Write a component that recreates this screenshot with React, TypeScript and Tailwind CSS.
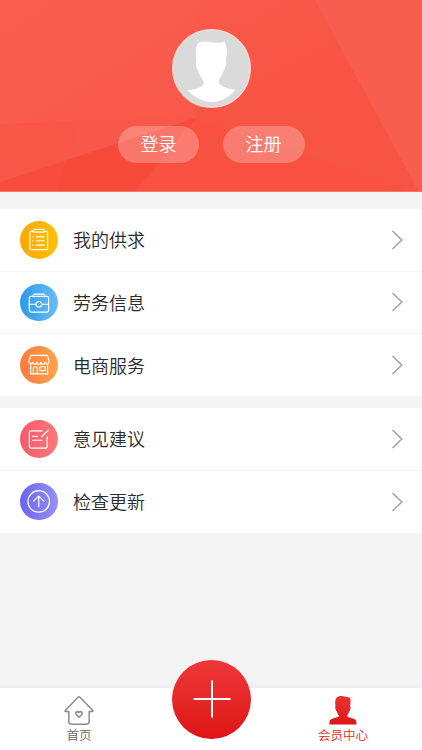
import type { ReactNode } from 'react';

type Item = { label: string; bg: string; icon: ReactNode };

const line = {
  fill: 'none',
  stroke: '#fff',
  strokeWidth: 1.2,
  strokeLinecap: 'round' as const,
  strokeLinejoin: 'round' as const,
};

// Every menu icon is drawn on a 38x38 grid, the size of its disc
const ListIcon = () => (
  <svg viewBox="0 0 38 38" className="w-full h-full" {...line}>
    <path d="M14 10.500h-2.500a1.500 1.500 0 0 0-1.500 1.500v15.500a1.500 1.500 0 0 0 1.500 1.500h15a1.500 1.500 0 0 0 1.500-1.500V12a1.500 1.500 0 0 0-1.500-1.500H24" />
    <path d="M13.500 11.200V9.500c0-.6.4-1 1-1h9c.6 0 1 .4 1 1v1.700z" />
    <path d="M16.500 16h8M16.500 20h8M16.500 24.500h8M12.900 16h.4M12.900 20h.4M12.900 24.500h.4" />
  </svg>
);

const CaseIcon = () => (
  <svg viewBox="0 0 38 38" className="w-full h-full" {...line}>
    <rect x="9.500" y="12.500" width="19.500" height="16" rx="1.800" />
    <path d="M13.500 12.500v-1.300c0-.6.4-1 1-1h9.500c.6 0 1 .4 1 1v1.300" />
    <path d="M9.500 20.500h6.500M22.300 20.500H29" />
    <circle cx="19.200" cy="20.500" r="2.800" />
  </svg>
);

const ShopIcon = () => (
  <svg viewBox="0 0 38 38" className="w-full h-full" {...line}>
    <path d="M11 9.500h16.700l2 6.200a2.100 2.300 0 0 1-4.100.5 2.100 2.300 0 0 1-4.200 0 2.100 2.300 0 0 1-4.200 0 2.100 2.300 0 0 1-4.200 0A2.100 2.300 0 0 1 9 15.700z" />
    <path d="M10.800 18.500v9.800H28v-9.800" />
    <path d="M13.500 28v-5.800c0-.8.5-1.200 1.200-1.200h1.600c.7 0 1.200.4 1.200 1.200V28" />
    <rect x="20" y="21" width="5.500" height="4" rx=".5" />
  </svg>
);

const NoteIcon = () => (
  <svg viewBox="0 0 38 38" className="w-full h-full" {...line}>
    <path d="M22.500 11H11.500a2 2 0 0 0-2 2v13.500a2 2 0 0 0 2 2h14a2 2 0 0 0 2-2V17" />
    <path d="M28.800 10.300l-7 6.700M12.800 16.500h5M12.800 20.500h9.500" />
  </svg>
);

const UpIcon = () => (
  <svg viewBox="0 0 38 38" className="w-full h-full" {...line}>
    <circle cx="19" cy="18.700" r="10.900" />
    <path d="M19 24V13.400M13.800 18.300l5.200-5 5.200 5" />
  </svg>
);

const groups: Item[][] = [
  [
    { label: '我的供求', bg: 'bg-linear-to-r from-[#ffa606] to-[#fdc008]', icon: <ListIcon /> },
    { label: '劳务信息', bg: 'bg-linear-to-r from-[#2c98ea] to-[#66bdf8]', icon: <CaseIcon /> },
    { label: '电商服务', bg: 'bg-linear-to-r from-[#fb7b3b] to-[#fda34d]', icon: <ShopIcon /> },
  ],
  [
    { label: '意见建议', bg: 'bg-linear-to-r from-[#f9566a] to-[#f97a7a]', icon: <NoteIcon /> },
    { label: '检查更新', bg: 'bg-linear-to-r from-[#6c64ee] to-[#9690f6]', icon: <UpIcon /> },
  ],
];

function Facets() {
  return (
    <svg viewBox="0 0 422 192" preserveAspectRatio="none" className="absolute inset-0 w-full h-full">
      <defs>
        <linearGradient id="right" x1="0" y1="0" x2=".6" y2="1">
          <stop offset="0" stopColor="#f95b4c" />
          <stop offset=".5" stopColor="#f85444" />
          <stop offset="1" stopColor="#f85444" />
        </linearGradient>
        <linearGradient id="left" x1="0" y1="0" x2="1" y2="1">
          <stop offset="0" stopColor="#f95e4f" />
          <stop offset="1" stopColor="#f95849" />
        </linearGradient>
      </defs>
      <rect width="422" height="192" fill="#f85e4f" />
      <path d="M0 0h196v118L0 124z" fill="url(#left)" />
      <path d="M196 0h119l104 192H196z" fill="url(#right)" />
      <path d="M0 124l196-6L0 182z" fill="#f85647" />
      <path d="M78 121.600l118-3.600-126 41z" fill="#f85849" />
      <path d="M0 182l196-64-61 74H0z" fill="#f84d3c" />
      <path d="M66 160.500l130-42.500-61 74H56z" fill="#f74a38" />
      <path d="M196 118l-61 74h29z" fill="#f85141" />
      <path d="M196 118l-32 74h246z" fill="#f85141" />
      <path d="M0 191.500h422" stroke="#f87468" />
    </svg>
  );
}

function Avatar() {
  return (
    <svg viewBox="0 0 79 79" className="w-[79px] h-[79px]">
      <circle cx="39.500" cy="39.500" r="38.900" fill="#dadada" stroke="#fbdcd9" strokeWidth="1.200" />
      <path
        fill="#fff"
        d="M24.500 31.500C23.700 28 23.300 20 24.700 16.500c1.300-3.200 4-4 7.800-3.900 4 .1 8 1.300 12.500 1.200 3.500-.1 6.300-.1 7.700-1.500.1 2.500 1.500 4.200 2 7.200.6 4-.2 8.500-.9 12 .9 1.700.5 3.700 0 5.500-.4 1.800-1 3.500-2 4-.9 3.100-2 5.700-3.800 8-1.500 1.900-1.900 3.800-.7 5.500 2.500 3.300 9.300 5.500 16.200 6.500C56 69 49 72.900 39.500 73 30.300 72.800 22 68 15.500 61.500c5.800-.7 11-1.700 14.500-4.200 2-1.500 2.300-4 1-6-2-3-4-6-5-10-1.200-.5-1.800-2.700-2-4.600-.2-1.900-.5-4 .5-5.200z"
      />
    </svg>
  );
}

function Row({ item, last }: { item: Item; last: boolean }) {
  return (
    <div className={`flex items-center pl-5 pr-[19px] ${last ? 'h-[62px]' : 'h-[62.500px] border-b border-[#f5f5f5]'}`}>
      <div className={`h-[37.500px] w-[37.500px] rounded-full ${item.bg}`}>{item.icon}</div>
      <span className="-mt-px ml-[15.500px] flex-1 text-[18px] font-[350] leading-6 text-[#2b2b2b]">{item.label}</span>
      <svg viewBox="0 0 12 20" className="h-5 w-3" fill="none" stroke="#a2a2a2" strokeWidth="1.500">
        <path d="M1.500 1l9.300 9-9.300 9" />
      </svg>
    </div>
  );
}

export default function App() {
  return (
    <main className="flex h-[750px] w-[422px] flex-col overflow-hidden bg-[#f4f4f4] font-['Noto_Sans_CJK_SC',sans-serif]">

      {/* Profile header */}
      <header className="relative h-[192px] shrink-0">
        <Facets />
        <div className="relative flex flex-col items-center pt-[29px]">
          <Avatar />
          <div className="mt-[18px] flex gap-6">
            <button className="h-[37px] w-[81px] rounded-full bg-white/25 pb-0.5 pl-px text-[18px] font-[350] text-white">登录</button>
            <button className="h-[37px] w-[82px] rounded-full bg-white/25 pb-0.5 text-[18px] font-[350] text-white">注册</button>
          </div>
        </div>
      </header>

      {/* Menu groups */}
      <div className="mt-[17px] flex flex-1 flex-col gap-3">
        {groups.map((items, i) => (
          <section key={i} className="bg-white">
            {items.map((item, j) => (
              <Row key={item.label} item={item} last={j === items.length - 1} />
            ))}
          </section>
        ))}
      </div>

      {/* Tab bar */}
      <nav className="relative flex h-[62px] shrink-0 justify-between bg-white px-[39px] shadow-[0_-1px_4px_#e9e9f3]">
        <a className="flex w-20 flex-col items-center pt-[7px] text-[12.500px] font-[350] leading-[18px] text-[#666]">
          <svg viewBox="0 0 30 30" className="h-[30px] w-[30px]" fill="none" stroke="#8b8b8b" strokeWidth="1.500" strokeLinejoin="round">
            <path d="M4.800 16.500H1.500c-.5 0-.6-.6-.2-1L14 2.200c.6-.6 1.400-.6 2 0l12.700 13.300c.4.4.3 1-.2 1h-3.300v9.700a3 3 0 0 1-3 3H7.800a3 3 0 0 1-3-3z" />
            <path d="M15 22.200l-2.600-2.400c-1.900-2 .8-4.300 2.600-2.300 1.800-2 4.500.3 2.600 2.300z" />
          </svg>
          <span className="mt-px">首页</span>
        </a>
        <a className="flex w-20 flex-col items-center pt-[7px] text-[12.500px] font-[350] leading-[18px] text-[#de2a2a]">
          <svg viewBox="0 0 28 30" className="h-[30px] w-7">
            <defs>
              <linearGradient id="person" x1="0" y1="0" x2="0" y2="1">
                <stop offset="0" stopColor="#eb3434" />
                <stop offset="1" stopColor="#df1616" />
              </linearGradient>
            </defs>
            <path
              fill="url(#person)"
              d="M6.500 11C6 8 5.900 5 7.200 3.200 8.400 1.300 10.500 1 12.500 1c2.500 0 4.200.9 6.500 1 1.800.2 2.600 1.700 2.600 3.500 0 2-.2 4-.5 5.500.6 1 .5 2.300.2 3.300-.2.900-.5 1.600-1.100 1.900-.3 1.600-.9 2.900-1.900 4-.5.7-.2 1.400.9 1.800 3.300 1.200 8.300 1.500 8.300 5.500v2H.400v-2c0-4 5.100-4.300 8.400-5.500 1.100-.4 1.400-1.100.9-1.800-1-1.100-1.700-2.400-2-4-.6-.3-1-1-1.200-1.900-.3-1-.5-2.300 0-3.300z"
            />
          </svg>
          <span className="mt-px">会员中心</span>
        </a>
        <button className="absolute -top-[28.500px] left-[172px] flex h-[79px] w-[79px] items-center justify-center rounded-full bg-linear-to-b from-[#ee3737] to-[#de1313]">
          <svg viewBox="0 0 38 38" className="h-[38px] w-[38px]" stroke="#fff" strokeWidth="2">
            <path d="M.500 19h37M19 .500v37" />
          </svg>
        </button>
      </nav>
    </main>
  );
}
